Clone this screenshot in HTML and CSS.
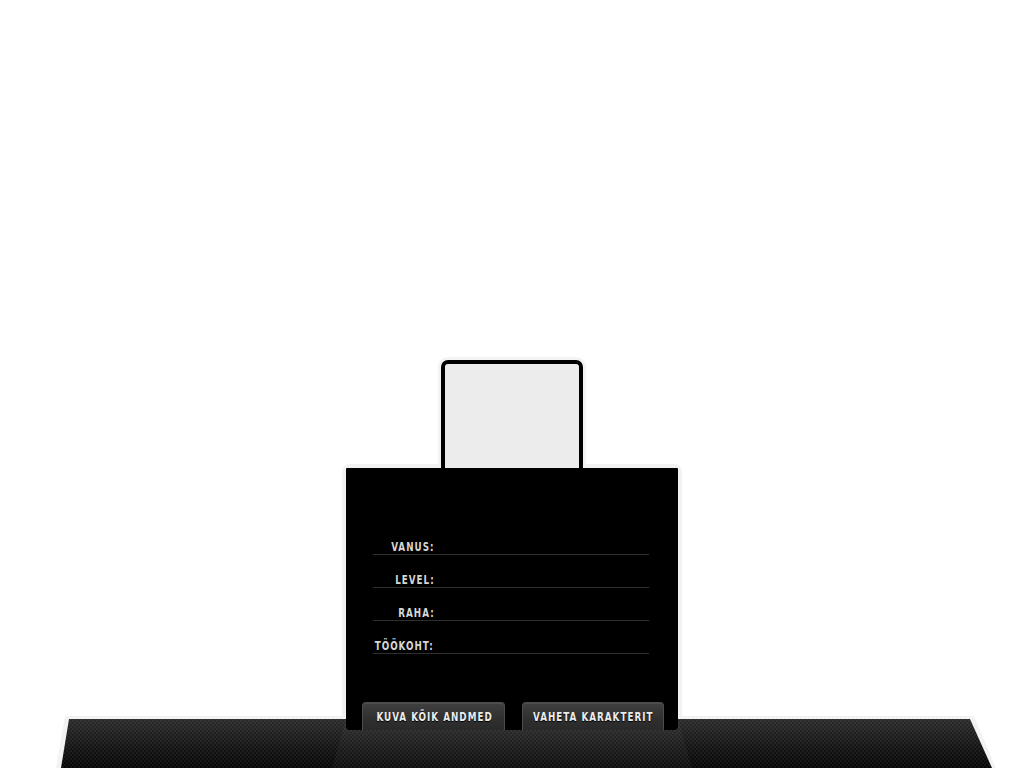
FILE: index.html
```html
<!DOCTYPE html>
<html lang="et">
<head>
<meta charset="utf-8">
<title>Karakter</title>
<link rel="stylesheet" href="styles.css">
</head>
<body>
<div class="stage">
  <div class="avatar-halo"><div class="avatar"></div></div>
  <div class="panel-frame">
    <div class="panel">
      <div class="rows">
        <div class="row"><span class="label"><span class="label-text">VANUS:</span></span><span class="value"></span></div>
        <div class="row"><span class="label"><span class="label-text">LEVEL:</span></span><span class="value"></span></div>
        <div class="row"><span class="label"><span class="label-text">RAHA:</span></span><span class="value"></span></div>
        <div class="row"><span class="label"><span class="label-text">TÖÖKOHT:</span></span><span class="value"></span></div>
      </div>
      <div class="actions">
        <button class="btn btn-left" type="button"><span class="btn-text">KUVA KÕIK ANDMED</span></button>
        <button class="btn btn-right" type="button"><span class="btn-text">VAHETA KARAKTERIT</span></button>
      </div>
    </div>
  </div>
  <div class="floor">
    <svg class="floor-art" width="1024" height="52" viewBox="0 0 1024 52" aria-hidden="true">
      <defs>
        <linearGradient id="fg" x1="0" y1="0" x2="0" y2="1">
          <stop offset="0" stop-color="#2c2c2c"/>
          <stop offset="0.55" stop-color="#161616"/>
          <stop offset="1" stop-color="#060606"/>
        </linearGradient>
        <pattern id="chk" width="4" height="4" patternUnits="userSpaceOnUse">
          <rect x="0" y="0" width="2" height="2" fill="#ffffff" fill-opacity="0.05"/>
          <rect x="2" y="2" width="2" height="2" fill="#ffffff" fill-opacity="0.05"/>
        </pattern>
      </defs>
      <polygon points="65,0 974,0 996,52 56,52" fill="#f3f3f3"/>
      <polygon points="69,3 970,3 992,52 61,52" fill="url(#fg)"/>
      <polygon points="69,3 970,3 992,52 61,52" fill="url(#chk)"/>
      <polygon points="346,3 678,3 692,52 332,52" fill="#ffffff" fill-opacity="0.035"/>
    </svg>
  </div>
</div>
</body>
</html>
```

FILE: styles.css
```css
html, body {
  margin: 0;
  padding: 0;
  background: #ffffff;
}

body {
  font-family: "DejaVu Sans Condensed", "Liberation Sans", sans-serif;
}

.stage {
  height: 768px;
  display: flex;
  flex-direction: column;
  justify-content: flex-end;
  align-items: center;
  overflow: hidden;
}

.avatar-halo {
  position: relative;
  z-index: 3;
  padding: 3px 3px 0;
  background: #f3f3f3;
  border-radius: 10px 10px 0 0;
  margin-bottom: -4px;
}

.avatar {
  width: 134px;
  height: 104px;
  border: 4px solid #000;
  border-bottom: 0;
  border-radius: 7px 7px 0 0;
  background: #ececec;
}

.panel-frame {
  padding: 4px 4px 0;
  background: #f2f2f2;
  border-radius: 8px 8px 0 0;
  margin-bottom: -14px;
}

.panel {
  position: relative;
  z-index: 2;
  width: 332px;
  height: 262px;
  box-sizing: border-box;
  background: #000;
  border-radius: 1px 1px 4px 4px;
  padding-top: 54px;
  display: flex;
  flex-direction: column;
}

.rows {
  margin: 0 29px 0 27px;
}

.row {
  height: 32px;
  border-bottom: 1px solid #2f2f2f;
  display: flex;
  align-items: flex-end;
}

.label {
  width: 60px;
  flex: none;
  display: flex;
  justify-content: flex-end;
  color: #d6d6d6;
  font-size: 12.5px;
  font-weight: bold;
  line-height: 12px;
  padding-bottom: 1px;
  white-space: nowrap;
}

.label-text {
  flex: none;
  display: block;
  letter-spacing: 1.3px;
  margin-right: -1.3px;
  transform: scaleX(0.78);
  transform-origin: right center;
}

.value {
  flex: 1;
}

.actions {
  margin-top: auto;
  display: flex;
  gap: 17px;
  padding-left: 16px;
}

.btn {
  height: 28px;
  box-sizing: border-box;
  border: 1px solid #4c4c4c;
  border-bottom: 0;
  border-radius: 4px 4px 0 0;
  background: linear-gradient(#404040, #2f2f2f 60%, #2a2a2a);
  box-shadow: inset 0 1px 0 rgba(255,255,255,0.08);
  color: #ececec;
  font-family: "DejaVu Sans Condensed", "Liberation Sans", sans-serif;
  font-size: 12.5px;
  font-weight: bold;
  text-shadow: 0 1px 1px #000;
  padding: 0;
  white-space: nowrap;
  display: flex;
  align-items: center;
  justify-content: center;
  overflow: hidden;
}

.btn-left { width: 143px; }
.btn-right { width: 142px; }

.btn-text {
  display: inline-block;
  letter-spacing: 1.3px;
  margin-right: -1.3px;
  transform: scaleX(0.78);
  transform-origin: center center;
}

.floor {
  position: relative;
  z-index: 1;
  width: 1024px;
  height: 52px;
  flex: none;
}

.floor-art {
  display: block;
}
```
